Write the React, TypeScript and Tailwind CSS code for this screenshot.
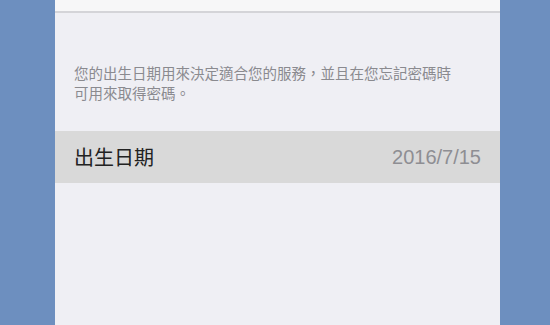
export default function App() {
  return (
    <div className="w-[550px] h-[325px] bg-[#6d8fbf] flex overflow-hidden" style={{ fontFamily: '"Noto Sans CJK TC", "Liberation Sans", sans-serif' }}>
      <div className="ml-[55px] w-[445px] h-full bg-[#efeff4] flex flex-col">
        <div className="h-[13px] bg-[#f7f7f8] border-b-2 border-[#d4d4d8] shrink-0" />
        <div className="h-[50px] shrink-0" />
        <p className="pl-[19px] pr-[45px] text-[14.5px] leading-[20px] text-[#8a8a8f]">
          您的出生日期用來決定適合您的服務，並且在您忘記密碼時可用來取得密碼。
        </p>
        <div className="h-[28px] shrink-0" />
        <div className="h-[52px] bg-[#d9d9d9] flex items-center justify-between pl-[19px] pr-[19px] shrink-0">
          <span className="text-[20px] text-[#222222]">出生日期</span>
          <span className="text-[20px] text-[#8e8e93]" style={{ fontFamily: '"Liberation Sans", sans-serif' }}>2016/7/15</span>
        </div>
      </div>
    </div>
  );
}
